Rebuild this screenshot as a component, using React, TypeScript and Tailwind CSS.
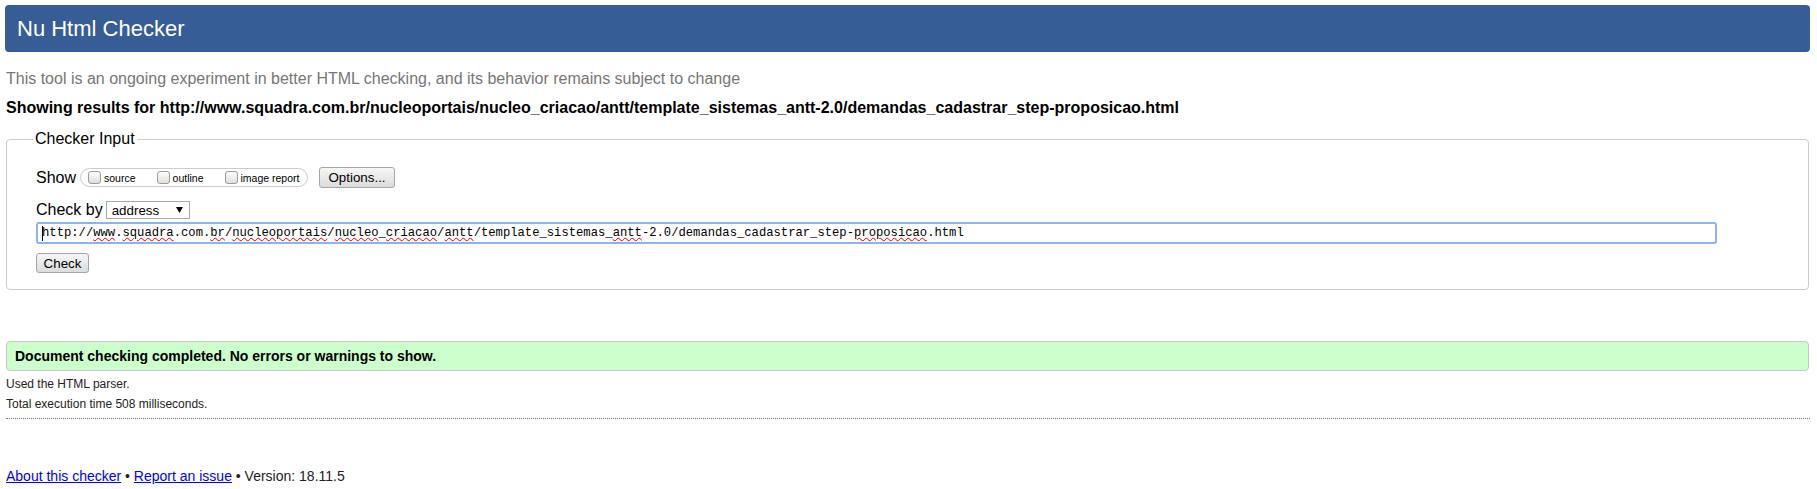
import React from "react";

function Sp({ children }: { children: React.ReactNode }) {
  return (
    <span className="underline decoration-wavy decoration-[#e00000] decoration-1 underline-offset-[1px]">
      {children}
    </span>
  );
}

function Checkbox() {
  return (
    <span className="inline-block h-[13px] w-[13px] shrink-0 rounded-[3px] border border-[#9a9a9a] bg-linear-to-b from-[#fdfdfd] to-[#dedede]" />
  );
}

export default function App() {
  return (
    <div className="min-h-[489px] bg-white pl-[6px] pr-[8px] pt-[5px] font-['Liberation_Sans',Arial,sans-serif] text-black">
      <h1 className="mx-[-1px] flex h-[47px] items-center rounded-[4px] bg-[#365d95] pl-[12px] text-[22px] font-normal leading-[24px] text-white">
        Nu Html Checker
      </h1>
      <p className="mt-[19px] text-[16px] leading-[16px] text-[#777]">
        This tool is an ongoing experiment in better HTML checking, and its behavior remains subject to change
      </p>
      <p className="mt-[13px] text-[16px] font-bold leading-[16px]">
        Showing results for http://www.squadra.com.br/nucleoportais/nucleo_criacao/antt/template_sistemas_antt-2.0/demandas_cadastrar_step-proposicao.html
      </p>
      <fieldset className="mt-[15px] rounded-[4px] border border-[#cccccc] pb-[16px] pl-[29px] pt-[20px]">
        <legend className="ml-[-3px] px-[2px] text-[16px] leading-[16px]">Checker Input</legend>
        <div className="flex h-[21px] items-center">
          <span className="text-[16px] leading-[16px]">Show</span>
          <div className="ml-[4px] flex h-[19px] w-[228px] items-center rounded-full border border-[#cccccc] pl-[7px]">
            <label className="flex items-center gap-[3px]">
              <Checkbox />
              <span className="text-[10.5px] leading-[12px]">source</span>
            </label>
            <label className="ml-[21px] flex items-center gap-[3px]">
              <Checkbox />
              <span className="text-[10.5px] leading-[12px]">outline</span>
            </label>
            <label className="ml-[21px] flex items-center gap-[3px]">
              <Checkbox />
              <span className="text-[10.5px] leading-[12px]">image report</span>
            </label>
          </div>
          <button className="ml-[11px] flex h-[21px] w-[76px] items-center justify-center rounded-[3px] border border-[#a6a6a6] bg-linear-to-b from-[#f6f6f6] to-[#dcdcdc] text-[13.33px] leading-[15px]">
            Options...
          </button>
        </div>
        <div className="mt-[13px] flex h-[18px] items-center">
          <span className="text-[16px] leading-[16px]">Check by</span>
          <div className="ml-[3px] flex h-[18px] w-[84px] items-center justify-between border border-[#a9a9a9] bg-white pl-[5px] pr-[6px] text-[13.33px] leading-[15px]">
            <span>address</span>
            <svg width="7" height="6" viewBox="0 0 7 6">
              <polygon points="0,0 7,0 3.5,6" fill="#000" />
            </svg>
          </div>
        </div>
        <div className="mt-[3px] flex h-[22px] w-[1681px] items-center whitespace-nowrap rounded-[3px] border-2 border-[#8fb4ea] bg-white pl-[4px] font-['Liberation_Mono',monospace] text-[12.2px] leading-[14px]">
          <span className="mr-[-1px] inline-block h-[15px] w-px bg-black" />
          <span>
            http://<Sp>www</Sp>.<Sp>squadra</Sp>.com.<Sp>br</Sp>/<Sp>nucleoportais</Sp>/<Sp>nucleo</Sp>_<Sp>criacao</Sp>/<Sp>antt</Sp>/template_sistemas_<Sp>antt</Sp>-2.0/demandas_cadastrar_step-<Sp>proposicao</Sp>.html
          </span>
        </div>
        <button className="mt-[9px] flex h-[20px] w-[53px] items-center justify-center rounded-[3px] border border-[#a6a6a6] bg-linear-to-b from-[#f6f6f6] to-[#dcdcdc] text-[13.33px] leading-[15px]">
          Check
        </button>
      </fieldset>
      <div className="mt-[51px] flex h-[30px] items-center rounded-[4px] border border-[#c8c8c8] bg-[#ccffcc] pl-[8px] text-[14px] font-bold leading-[14px]">
        Document checking completed. No errors or warnings to show.
      </div>
      <p className="mt-[4px] text-[12px] leading-[19.5px] text-[#222]">Used the HTML parser.</p>
      <p className="text-[12px] leading-[19.5px] text-[#222]">Total execution time 508 milliseconds.</p>
      <div className="mr-[-1px] mt-[4px] border-t border-dotted border-[#777]" />
      <p className="mt-[50px] text-[14px] leading-[14px] text-[#222]">
        <a href="#" className="text-[#0000ee] underline">About this checker</a> •{" "}
        <a href="#" className="text-[#0000ee] underline">Report an issue</a> • Version: 18.11.5
      </p>
    </div>
  );
}
